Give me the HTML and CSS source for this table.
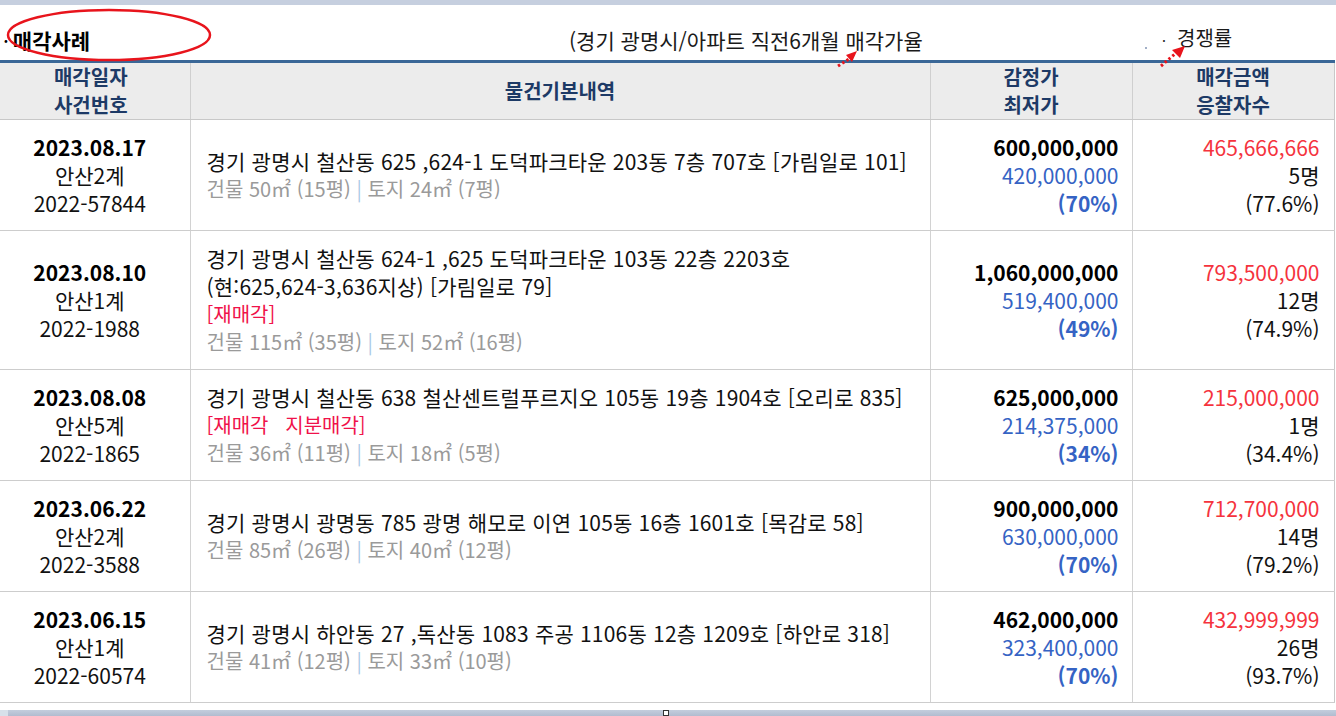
FILE: index.html
```html
<!DOCTYPE html>
<html lang="ko">
<head>
<meta charset="utf-8">
<title>매각사례</title>
<link rel="stylesheet" href="styles.css">
</head>
<body>
<div class="page">
  <div class="topstrip"></div>
  <div class="titlebar">
    <div class="title"><span class="dot">·</span>매각사례</div>
    <div class="subtitle">(경기 광명시/아파트 직전6개월 매각가율</div>
    <div class="rate"><span class="tiny">·</span>경쟁률</div>
  </div>
  <table class="cases">
    <colgroup>
      <col class="c1"><col class="c2"><col class="c3"><col class="c4">
    </colgroup>
    <thead>
      <tr>
        <th class="h1"><div>매각일자</div><div>사건번호</div></th>
        <th><div>물건기본내역</div></th>
        <th><div>감정가</div><div>최저가</div></th>
        <th><div>매각금액</div><div>응찰자수</div></th>
      </tr>
    </thead>
    <tbody>
      <tr>
        <td class="date"><div class="b">2023.08.17</div><div>안산2계</div><div>2022-57844</div></td>
        <td class="desc"><div>경기 광명시 철산동 625 ,624-1 도덕파크타운 203동 7층 707호 [가림일로 101]</div><div class="area">건물 50㎡ (15평) <span class="sep">|</span> 토지 24㎡ (7평)</div></td>
        <td class="price"><div class="b">600,000,000</div><div class="min">420,000,000</div><div class="min b">(70%)</div></td>
        <td class="sold"><div class="red">465,666,666</div><div>5명</div><div>(77.6%)</div></td>
      </tr>
      <tr>
        <td class="date"><div class="b">2023.08.10</div><div>안산1계</div><div>2022-1988</div></td>
        <td class="desc"><div>경기 광명시 철산동 624-1 ,625 도덕파크타운 103동 22층 2203호</div><div>(현:625,624-3,636지상) [가림일로 79]</div><div class="tag">[재매각]</div><div class="area">건물 115㎡ (35평) <span class="sep">|</span> 토지 52㎡ (16평)</div></td>
        <td class="price"><div class="b">1,060,000,000</div><div class="min">519,400,000</div><div class="min b">(49%)</div></td>
        <td class="sold"><div class="red">793,500,000</div><div>12명</div><div>(74.9%)</div></td>
      </tr>
      <tr>
        <td class="date"><div class="b">2023.08.08</div><div>안산5계</div><div>2022-1865</div></td>
        <td class="desc"><div>경기 광명시 철산동 638 철산센트럴푸르지오 105동 19층 1904호 [오리로 835]</div><div class="tag">[재매각&nbsp;&nbsp;&nbsp;지분매각]</div><div class="area">건물 36㎡ (11평) <span class="sep">|</span> 토지 18㎡ (5평)</div></td>
        <td class="price"><div class="b">625,000,000</div><div class="min">214,375,000</div><div class="min b">(34%)</div></td>
        <td class="sold"><div class="red">215,000,000</div><div>1명</div><div>(34.4%)</div></td>
      </tr>
      <tr>
        <td class="date"><div class="b">2023.06.22</div><div>안산2계</div><div>2022-3588</div></td>
        <td class="desc"><div>경기 광명시 광명동 785 광명 해모로 이연 105동 16층 1601호 [목감로 58]</div><div class="area">건물 85㎡ (26평) <span class="sep">|</span> 토지 40㎡ (12평)</div></td>
        <td class="price"><div class="b">900,000,000</div><div class="min">630,000,000</div><div class="min b">(70%)</div></td>
        <td class="sold"><div class="red">712,700,000</div><div>14명</div><div>(79.2%)</div></td>
      </tr>
      <tr>
        <td class="date"><div class="b">2023.06.15</div><div>안산1계</div><div>2022-60574</div></td>
        <td class="desc"><div>경기 광명시 하안동 27 ,독산동 1083 주공 1106동 12층 1209호 [하안로 318]</div><div class="area">건물 41㎡ (12평) <span class="sep">|</span> 토지 33㎡ (10평)</div></td>
        <td class="price"><div class="b">462,000,000</div><div class="min">323,400,000</div><div class="min b">(70%)</div></td>
        <td class="sold"><div class="red">432,999,999</div><div>26명</div><div>(93.7%)</div></td>
      </tr>
    </tbody>
  </table>
  <div class="bottomstrip"><span class="thumb"></span></div>

  <svg class="annot" width="1336" height="716" viewBox="0 0 1336 716" aria-hidden="true">
    <ellipse cx="109" cy="35" rx="101" ry="25" fill="none" stroke="#e8141c" stroke-width="2.5"/>
    <line x1="838" y1="66" x2="849" y2="59" stroke="#e8141c" stroke-width="3" stroke-dasharray="2.5 2.5"/>
    <polygon points="857,51 846,55 852,62" fill="#e8141c"/>
    <line x1="1161" y1="66" x2="1176" y2="53" stroke="#e8141c" stroke-width="3" stroke-dasharray="2.5 2.5"/>
    <polygon points="1185,46 1172,50 1180,58" fill="#e8141c"/>
    <circle cx="1146" cy="48" r="0.8" fill="#2a4a80"/>
  </svg>
</div>
</body>
</html>
```

FILE: styles.css
```css
html, body {
  margin: 0;
  padding: 0;
  background: #fff;
}
body {
  font-family: "Noto Sans CJK KR", "Noto Sans", sans-serif;
  color: #111;
  width: 1336px;
  height: 716px;
  overflow: hidden;
}
.page {
  position: relative;
  width: 1336px;
  height: 716px;
}
.topstrip {
  height: 5px;
  background: #c6cfdf;
}
.titlebar {
  height: 55px;
  display: grid;
  grid-template-columns: 569px 593px auto;
  align-items: end;
  box-sizing: border-box;
  font-size: 21px;
  line-height: 28px;
  padding-bottom: 6px;
}
.title {
  font-weight: bold;
  color: #000;
  padding-left: 3px;
}
.title .dot {
  font-weight: normal;
  margin-right: 4px;
}
.subtitle {
  color: #1a1a1a;
}
.rate {
  color: #1a1a1a;
  font-size: 20px;
}
.rate .tiny {
  display: inline-block;
  width: 15px;
  font-size: 14px;
}
.cases {
  width: 1334px;
  border-collapse: collapse;
  table-layout: fixed;
  border-top: 3px solid #3a6797;
  border-right: 1px solid #c8c8c8;
}
.c1 { width: 190px; }
.c2 { width: 740px; }
.c3 { width: 202px; }
.c4 { width: 202px; }
.cases th {
  background: #ececec;
  color: #1d3a66;
  font-size: 20px;
  font-weight: bold;
  padding: 0;
  border-left: 1px solid #cfcfcf;
  border-bottom: 1px solid #c8c8c8;
  text-align: center;
}
.cases th div {
  height: 28px;
  line-height: 28px;
}
.cases th.h1 { padding-right: 8px; }
.cases th:first-child { border-left: none; }
.cases td {
  font-size: 21px;
  padding: 13px 0;
  border-left: 1px solid #d2d2d2;
  border-bottom: 1px solid #cdcdcd;
  vertical-align: middle;
  white-space: nowrap;
}
.cases td > div {
  height: 28px;
  line-height: 28px;
}
.cases td:first-child { border-left: none; }
.b { font-weight: 600; }
.date {
  text-align: center;
  color: #111;
  padding-right: 10px !important;
}
.date .b { color: #000; }
.desc {
  padding-left: 16px !important;
  color: #111;
  letter-spacing: 0.2px;
}
.desc .area {
  color: #9a9a9a;
  font-size: 20px;
  letter-spacing: 0;
}
.sep { color: #a9c9e6; }
.desc .tag { color: #f0124a; font-size: 20px; letter-spacing: 0; }
.price {
  text-align: right;
  padding-right: 13px !important;
}
.price .b { color: #000; }
.price .min { color: #3563c4; }
.sold {
  text-align: right;
  padding-right: 14px !important;
  color: #111;
}
.red { color: #f5333d; }
.bottomstrip {
  position: relative;
  margin-top: 7px;
  height: 7px;
  background: linear-gradient(#c3cddd, #aeb9cd);
  box-shadow: inset 8px 0 0 #d7e0ea;
}
.thumb {
  position: absolute;
  left: 663px;
  top: 0;
  width: 4px;
  height: 4px;
  border: 1px solid #333;
  background: #fff;
}
.annot {
  position: absolute;
  left: 0;
  top: 0;
  pointer-events: none;
}
```
